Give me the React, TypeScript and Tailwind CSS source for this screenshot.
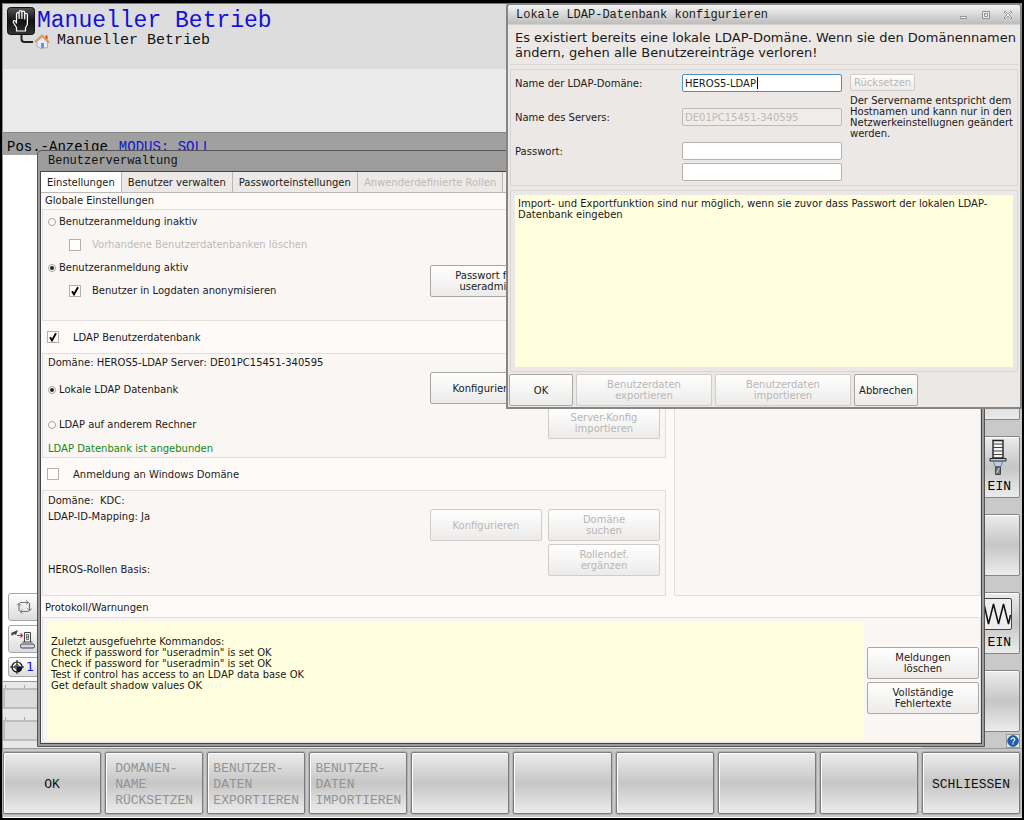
import React from "react";

const mono = "font-['Liberation_Mono',monospace]";

type Children = { children?: React.ReactNode };

function Button({ children, disabled, className = "" }: Children & { disabled?: boolean; className?: string }) {
  return (
    <button
      type="button"
      disabled={disabled}
      className={`flex items-center justify-center rounded-[2px] border bg-linear-to-b from-white to-[#ecebea] text-center leading-[11px] whitespace-pre-line ${
        disabled ? "border-[#cfcccb] text-[#b8b6b5]" : "border-[#a9a6a4] text-[#1a1a1a]"
      } ${className}`}
    >
      {children}
    </button>
  );
}

function Radio({ label, name, checked }: { label: string; name: string; checked?: boolean }) {
  return (
    <label className="flex items-center gap-[3px] pl-[5px]">
      <span className="relative flex size-[8px]">
        <input
          type="radio"
          name={name}
          defaultChecked={checked}
          className="peer size-[8px] appearance-none rounded-full border border-[#a3a09f] bg-white"
        />
        <span className="pointer-events-none absolute inset-[2px] hidden rounded-full bg-[#222] peer-checked:block" />
      </span>
      {label}
    </label>
  );
}

function Check({
  label,
  checked,
  disabled,
  className = "",
}: {
  label: string;
  checked?: boolean;
  disabled?: boolean;
  className?: string;
}) {
  return (
    <label className={`flex items-center ${disabled ? "text-[#bdbab9]" : ""} ${className}`}>
      <span className="relative flex size-[12px]">
        <input
          type="checkbox"
          defaultChecked={checked}
          disabled={disabled}
          className="peer size-[12px] appearance-none border border-[#b3b0af] bg-white"
        />
        <svg viewBox="0 0 12 12" className="pointer-events-none absolute inset-0 hidden size-[12px] peer-checked:block">
          <path d="M3 6.2 5 9.3 9 2.2" fill="none" stroke="#000" strokeWidth="1.9" />
        </svg>
      </span>
      {label}
    </label>
  );
}

function Panel({ children, className = "" }: Children & { className?: string }) {
  return <section className={`flex border border-[#e2dedc] bg-[#faf6f4] ${className}`}>{children}</section>;
}

function SoftKey({ label, disabled }: { label?: string; disabled?: boolean }) {
  return (
    <button
      type="button"
      disabled={disabled}
      aria-label={label ?? "Softkey"}
      className={`flex h-[62px] items-center justify-center rounded-[2px] border border-[#7c7c7c] bg-linear-to-b from-[#ececec] via-[#c6c6c6] to-[#ececec] pt-[4px] text-left text-[13px] leading-[16px] whitespace-pre shadow-[inset_1px_1px_0_#fff,0_0_0_1px_#b0b0b0] ${mono} ${
        disabled ? "text-[#939393]" : "text-[#111]"
      }`}
    >
      {label}
    </button>
  );
}

function SideKey({ children, label }: Children & { label: string }) {
  return (
    <button
      type="button"
      aria-label={label}
      className={`flex h-[62px] w-[98px] shrink-0 flex-col items-end justify-between rounded-[2px] border border-[#858585] bg-linear-to-b from-[#ececec] via-[#c6c6c6] to-[#ececec] pt-[2px] pr-[8px] pb-[2px] text-[13px] leading-[16px] shadow-[inset_1px_1px_0_#fff] ${mono}`}
    >
      {children}
    </button>
  );
}

function HandIcon() {
  return (
    <svg viewBox="0 0 28 28" className="size-[28px] shrink-0">
      <defs>
        <linearGradient id="hand-bg" x1="0" y1="0" x2="0" y2="1">
          <stop offset="0" stopColor="#555" />
          <stop offset="0.5" stopColor="#111" />
          <stop offset="1" stopColor="#333" />
        </linearGradient>
      </defs>
      <rect x="0.5" y="0.5" width="27" height="27" rx="3" fill="url(#hand-bg)" stroke="#111" />
      <path
        d="M9.500 24v-3.500L6.300 15.500c-.5-2 1.200-2.600 2.200-1.200l1 1.700V7.200c0-2 2.600-2 2.600 0v4.300-6.400c0-2 2.800-2 2.800 0v6.400-5.900c0-2 2.800-2 2.800 0v6.400-4.400c0-1.800 2.700-1.800 2.700 0v8.900c0 2-1.100 3-1.900 4.200V24z"
        fill="none"
        stroke="#fff"
        strokeWidth="1.200"
        strokeLinejoin="round"
      />
    </svg>
  );
}

function HomeIcon() {
  return (
    <svg viewBox="0 0 16 15" className="h-[15px] w-[16px] shrink-0">
      <path d="M3 7.500 8.500 3 13.500 8v5.500L7 14.500 3 12.500z" fill="#e8ecf8" stroke="#8a96b8" strokeWidth="0.700" />
      <path d="M7 14.300V9h3v4.800z" fill="#6f8fd0" />
      <path d="M11.500 1.500h2V6l-2-1.700z" fill="#b94a2c" />
      <path d="M.8 8 8 1.500 15 8.500" fill="none" stroke="#e09a4a" strokeWidth="1.800" />
    </svg>
  );
}

function LoopIcon() {
  return (
    <svg viewBox="0 0 18 18" className="size-[18px]" fill="none" stroke="#777" strokeWidth="1.200">
      <path d="M5 4.500h8.500M14.500 5v8M13.500 13.500H5M4 13V5" />
      <path d="m11 2.500 2.500 2-2.500 2M7.500 11.500 5 13.500l2.500 2M2 7.500 4 5l2 2.500M12.500 10.500l2 2.500 2-2.500" strokeWidth="0.900" />
    </svg>
  );
}

function MachineIcon() {
  return (
    <svg viewBox="0 0 26 22" className="h-[22px] w-[26px]">
      <path d="m1 5 7-3-2 5-2-1-2 2z" fill="#444" />
      <path d="M7 7.500h5M10.500 5.500l2 2-2 2" fill="none" stroke="#d22" strokeWidth="1.200" />
      <path d="M14.500 14V4.500h6V14M12.500 14h10" fill="none" stroke="#444" />
      <path d="M16.500 6.500h2v5h-2zM16.500 9h2" fill="#ddd" stroke="#444" strokeWidth="0.700" />
      <rect x="10.500" y="16" width="14" height="4" rx="1.500" fill="#cfd6e6" stroke="#445" />
    </svg>
  );
}

function DatumIcon() {
  return (
    <svg viewBox="0 0 14 14" className="size-[14px]">
      <circle cx="7" cy="7" r="5" fill="#fff" stroke="#111" strokeWidth="1.200" />
      <path d="M7 7h5a5 5 0 0 1-5 5z" fill="#111" />
      <circle cx="7" cy="7" r="2.300" fill="none" stroke="#111" strokeWidth="0.800" />
      <path d="M7 0v14M0 7h14" stroke="#111" strokeWidth="1" />
    </svg>
  );
}

function SpindleIcon() {
  return (
    <svg viewBox="0 0 20 38" className="mr-[3px] h-[38px] w-[20px]">
      <path d="M5 1.500h10V19H5z" fill="#f4f4f4" stroke="#222" strokeWidth="1.400" />
      <path d="M5 5h10M5 8.500h10M5 12h10M5 15.500h10" stroke="#444" />
      <path d="M2 19.500h16v2.500H2z" fill="#ccd" stroke="#222" />
      <path d="M5.500 22.500h9l-1.500 5H7z" fill="#b9cdf2" stroke="#567" strokeWidth="0.700" />
      <path d="M7.500 28h5v7.500h-5z" fill="#777" stroke="#444" />
      <path d="m8.500 34 3-5" stroke="#ddd" />
    </svg>
  );
}

function WaveIcon() {
  return (
    <svg viewBox="0 0 34 32" className="-mr-[1px] mt-[3px] h-[32px] w-[34px]">
      <rect x="0.500" y="0.500" width="33" height="31" rx="1.500" fill="#eee" stroke="#444" />
      <path d="m1 25 5-19 4.500 20 5-20 5 20 5-20 5 20 2-9" fill="none" stroke="#111" strokeWidth="1.500" />
    </svg>
  );
}

function Gauge() {
  return (
    <div className="flex flex-col">
      <div className="flex h-[3px] gap-[18px] pl-[2px]">
        <i className="w-px bg-[#aaa]" />
        <i className="w-px bg-[#aaa]" />
      </div>
      <div className="h-[21px] w-[60px] border-2 border-[#bdbdbd] bg-[#dcdcdc]" />
    </div>
  );
}

function Desktop() {
  return (
    <div className="flex flex-1 flex-col border-l border-[#8f8f8f] bg-[#c9c9c9]">
      <header className={`h-[66px] border-t border-[#777] bg-[#dddddd] pt-[3px] pl-[4px] ${mono}`}>
        <div className="flex items-center gap-[2px]">
          <HandIcon />
          <h1 className="text-[23px] leading-[28px] text-[#1412d4]">Manueller Betrieb</h1>
        </div>
        <div className="-mt-[2px] flex items-center pl-[13px]">
          <svg viewBox="0 0 14 15" className="-mt-[5px] h-[15px] w-[14px]">
            <path d="M1.500 3v5q0 3 3 3H13" fill="none" stroke="#222" strokeWidth="2" />
          </svg>
          <HomeIcon />
          <h2 className="pl-[7px] text-[15px] leading-[16px] text-[#111]">Manueller Betrieb</h2>
        </div>
      </header>
      <div className="h-[63px] bg-[#ebebeb]" />
      <div className={`flex h-[23px] items-center gap-[11px] border-t border-[#8a8a8a] bg-[#a0a0a0] pt-[5px] pl-[4px] text-[14px] leading-[16px] ${mono}`}>
        <span>Pos.-Anzeige</span>
        <span className="text-[#1412d4]">MODUS: SOLL</span>
      </div>
      <div className="flex flex-1">
        <div className="flex flex-1 flex-col justify-end bg-white">
          <div className="flex flex-col items-start gap-[4px] pb-[4px] pl-[5px]">
            <button type="button" aria-label="Zyklus" className="flex h-[28px] w-[40px] items-center rounded-[3px] border border-[#a5a5a5] bg-linear-to-b from-white to-[#dcdcdc] pl-[6px]">
              <LoopIcon />
            </button>
            <button type="button" aria-label="Maschine" className="flex h-[28px] w-[40px] items-center rounded-[3px] border border-[#a5a5a5] bg-linear-to-b from-white to-[#dcdcdc] pl-px">
              <MachineIcon />
            </button>
            <button type="button" className="flex h-[20px] w-[40px] items-center gap-[2px] rounded-[3px] border border-[#a5a5a5] bg-linear-to-b from-white to-[#dcdcdc] pl-px text-[13px] text-[#1412d4] font-['DejaVu_Sans',sans-serif]">
              <DatumIcon />1
            </button>
          </div>
          <div className="flex h-[67px] flex-col gap-[8px] border-t border-[#999] bg-[#e8e8e8] pt-[3px]">
            <Gauge />
            <Gauge />
          </div>
        </div>
        <aside className="flex w-[100px] flex-col items-end justify-end gap-[16px] pr-[2px]">
          <SideKey label="Softkey 1" />
          <SideKey label="Spindel ein">
            <SpindleIcon />
            <span>EIN</span>
          </SideKey>
          <SideKey label="Softkey 3" />
          <SideKey label="Override ein">
            <WaveIcon />
            <span>EIN</span>
          </SideKey>
          <div className="flex flex-col items-end gap-[2px]">
            <SideKey label="Softkey 5" />
            <button type="button" aria-label="Hilfe" className="flex size-[14px] items-center justify-center border border-[#999] bg-[#e6e6e6]">
              <svg viewBox="0 0 12 12" className="size-[12px]">
                <circle cx="6" cy="6" r="5.400" fill="#1d5fb4" stroke="#0c3570" strokeWidth="0.600" />
                <path d="M4.200 4.700c0-2.400 3.700-2.300 3.600 0 0 1.200-1.800 1.200-1.800 2.700M6 8.300v1.300" fill="none" stroke="#fff" strokeWidth="1.200" />
              </svg>
            </button>
          </div>
        </aside>
      </div>
      <footer className="grid grid-cols-10 gap-[4px] border-t border-[#999] border-b border-b-white pt-[3px] pr-[2px] pb-[3px]">
        <SoftKey label="OK" />
        <SoftKey disabled label={"DOMÄNEN-\nNAME\nRÜCKSETZEN"} />
        <SoftKey disabled label={"BENUTZER-\nDATEN\nEXPORTIEREN"} />
        <SoftKey disabled label={"BENUTZER-\nDATEN\nIMPORTIEREN"} />
        <SoftKey />
        <SoftKey />
        <SoftKey />
        <SoftKey />
        <SoftKey />
        <SoftKey label="SCHLIESSEN" />
      </footer>
    </div>
  );
}

const tabs = [
  { label: "Einstellungen", active: true },
  { label: "Benutzer verwalten" },
  { label: "Passworteinstellungen" },
  { label: "Anwenderdefinierte Rollen", disabled: true },
];

function UserWindow() {
  return (
    <div className="absolute top-[150px] right-[39px] bottom-[73px] left-[37px] flex flex-col rounded-t-[4px] border border-[#555] bg-[#9c9c9c] px-[2px] pb-[2px]">
      <h2 className={`h-[20px] shrink-0 pl-[8px] text-[12px] leading-[21px] text-[#111] ${mono}`}>Benutzerverwaltung</h2>
      <div className="flex flex-1 flex-col border border-[#444] bg-[#fefaf8] text-[#1a1a1a]">
        <div role="tablist" className="flex h-[21px] items-stretch border-b border-[#bbb7b5] bg-[#f3efed]">
          {tabs.map((t) => (
            <button
              key={t.label}
              type="button"
              role="tab"
              aria-selected={!!t.active}
              disabled={t.disabled}
              className={`border-r border-[#bbb7b5] px-[6px] ${t.active ? "bg-white" : "bg-[#ece9e7]"} ${
                t.disabled ? "text-[#bdbab9]" : ""
              }`}
            >
              {t.label}
            </button>
          ))}
        </div>
        <div className="flex gap-[8px] pl-px">
          <div className="flex w-[624px] flex-col">
            <h3 className="h-[16px] pl-[3px] leading-[16px]">Globale Einstellungen</h3>
            <Panel className="h-[112px] justify-between pr-[5px]">
              <div className="flex flex-col *:h-[23px]">
                <Radio name="login" label="Benutzeranmeldung inaktiv" />
                <Check disabled className="gap-[11px] pl-[26px]" label="Vorhandene Benutzerdatenbanken löschen" />
                <Radio name="login" checked label="Benutzeranmeldung aktiv" />
                <Check checked className="gap-[11px] pl-[26px]" label="Benutzer in Logdaten anonymisieren" />
              </div>
              <div className="grid grid-cols-2 gap-[6px] pt-[55px]">
                <Button className="h-[32px] w-[112px]">{"Passwort für\nuseradmin"}</Button>
              </div>
            </Panel>
            <Check checked className="h-[32px] gap-[14px] pl-[5px]" label="LDAP Benutzerdatenbank" />
            <Panel className="h-[105px] justify-between pr-[5px]">
              <div className="flex flex-col">
                <p className="pl-[5px] leading-[18px]">Domäne: HEROS5-LDAP Server: DE01PC15451-340595</p>
                <div className="flex flex-col *:h-[35px]">
                  <Radio name="db" checked label="Lokale LDAP Datenbank" />
                  <Radio name="db" label="LDAP auf anderem Rechner" />
                </div>
                <p className="pl-[5px] leading-[14px] text-[#128a12]">LDAP Datenbank ist angebunden</p>
              </div>
              <div className="grid grid-cols-2 content-start gap-x-[6px] gap-y-[3px] pt-[18px]">
                <Button className="h-[32px] w-[112px]">Konfigurieren</Button>
                <Button disabled className="col-start-2 row-start-2 h-[32px] w-[112px]">{"Server-Konfig\nimportieren"}</Button>
              </div>
            </Panel>
            <Check className="h-[32px] gap-[14px] pl-[5px]" label="Anmeldung an Windows Domäne" />
            <Panel className="h-[106px] justify-between pr-[5px]">
              <div className="flex flex-col pl-[5px] leading-[16px]">
                <p className="pt-[2px] whitespace-pre">Domäne:  KDC:</p>
                <p>LDAP-ID-Mapping: Ja</p>
                <p className="pt-[37px]">HEROS-Rollen Basis:</p>
              </div>
              <div className="grid grid-cols-2 content-start gap-x-[6px] gap-y-[3px] pt-[18px]">
                <Button disabled className="h-[32px] w-[112px]">Konfigurieren</Button>
                <Button disabled className="h-[32px] w-[112px]">{"Domäne\nsuchen"}</Button>
                <Button disabled className="col-start-2 h-[32px] w-[112px]">{"Rollendef.\nergänzen"}</Button>
              </div>
            </Panel>
          </div>
          <Panel className="mt-[16px] flex-1" />
        </div>
        <h3 className="h-[21px] pl-[4px] leading-[23px]">Protokoll/Warnungen</h3>
        <Panel className="ml-px flex-1 gap-[3px] pt-[4px] pr-px pb-[3px] pl-[5px]">
          <pre className="flex-1 bg-[#ffffdf] pt-[14px] pl-[3px] leading-[11px] font-['DejaVu_Sans',sans-serif]">
            {`Zuletzt ausgefuehrte Kommandos:
Check if password for "useradmin" is set OK
Check if password for "useradmin" is set OK
Test if control has access to an LDAP data base OK
Get default shadow values OK`}
          </pre>
          <div className="flex w-[112px] flex-col justify-center gap-[3px]">
            <Button className="h-[32px]">{"Meldungen\nlöschen"}</Button>
            <Button className="h-[32px]">{"Vollständige\nFehlertexte"}</Button>
          </div>
        </Panel>
      </div>
    </div>
  );
}

const field = "h-[18px] w-full rounded-[2px] border px-[2px] leading-[16px] outline-none";

function LdapDialog() {
  return (
    <div role="dialog" aria-labelledby="ldap-title" className="absolute top-[3px] right-[2px] left-[506px] flex flex-col rounded-t-[4px] border-2 border-[#858585] bg-[#ece8e6] text-[#1a1a1a]">
      <div className="flex h-[19px] items-center justify-between rounded-t-[3px] bg-linear-to-b from-[#f4f4f4] to-[#bdbdbd] pr-[7px] pl-[8px]">
        <h2 id="ldap-title" className={`text-[12px] leading-[18px] ${mono}`}>Lokale LDAP-Datenbank konfigurieren</h2>
        <div className="flex gap-[12px] text-[#8f8f8f]">
          <button type="button" aria-label="Minimieren">
            <svg viewBox="0 0 10 10" className="size-[10px]"><path d="M1.500 6.500h6v2h-6z" fill="#fff" stroke="currentColor" /></svg>
          </button>
          <button type="button" aria-label="Maximieren">
            <svg viewBox="0 0 10 10" className="size-[10px]"><path d="M1.500 1.500h7v7h-7zM3.500 3.500h3v3h-3z" fill="#eee" stroke="currentColor" /></svg>
          </button>
          <button type="button" aria-label="Schließen">
            <svg viewBox="0 0 10 10" className="size-[10px]"><path d="m1 2 1-1 3 3 3-3 1 1-3 3 3 3-1 1-3-3-3 3-1-1 3-3z" fill="#fff" stroke="currentColor" strokeWidth="0.900" /></svg>
          </button>
        </div>
      </div>
      <div className="flex flex-col gap-[4px] border-t border-[#d5d1cf] px-[2px]">
        <p className="border-b border-[#d9d5d3] pt-[5px] pb-[4px] pl-[5px] text-[13px] leading-[15px]">
          Es existiert bereits eine lokale LDAP-Domäne. Wenn sie den Domänennamen ändern, gehen alle Benutzereinträge verloren!
        </p>
        <div className="flex gap-[8px] border border-[#d9d5d3] px-[4px] py-[4px]">
          <div className="grid grid-cols-[167px_160px] grid-rows-[18px_18px_18px_18px] items-center">
            <label htmlFor="domain">Name der LDAP-Domäne:</label>
            <div className="relative">
              <input id="domain" defaultValue="HEROS5-LDAP" className={`${field} border-[#4a90c4] bg-white`} />
              <span className="absolute top-[3px] left-[75px] h-[12px] w-px bg-black" />
            </div>
            <label htmlFor="server" className="pt-[32px]">Name des Servers:</label>
            <input id="server" disabled defaultValue="DE01PC15451-340595" className={`${field} mt-[32px] border-[#bdbab8] bg-[#efecea] text-[#bdbab9]`} />
            <label htmlFor="pw" className="pt-[64px]">Passwort:</label>
            <input id="pw" type="password" className={`${field} mt-[64px] border-[#b5b2b0] bg-white`} />
            <input aria-label="Passwort wiederholen" type="password" className={`${field} col-start-2 mt-[70px] border-[#b5b2b0] bg-white`} />
          </div>
          <div className="flex h-[107px] flex-1 flex-col items-start gap-[4px]">
            <Button disabled className="h-[17px] px-[3px]">Rücksetzen</Button>
            <p className="leading-[11px]">
              Der Servername entspricht dem Hostnamen und kann nur in den Netzwerkeinstellugnen geändert werden.
            </p>
          </div>
        </div>
        <div className="border border-[#d9d5d3] p-[4px]">
          <p className="h-[172px] bg-[#ffffdf] px-[3px] pt-[3px] leading-[11px]">
            Import- und Exportfunktion sind nur möglich, wenn sie zuvor dass Passwort der lokalen LDAP-Datenbank eingeben
          </p>
        </div>
      </div>
      <div className="flex gap-[3px] pt-[2px] pb-px pl-px">
        <Button className="h-[32px] w-[64px]">OK</Button>
        <Button disabled className="h-[32px] w-[136px]">{"Benutzerdaten\nexportieren"}</Button>
        <Button disabled className="h-[32px] w-[136px]">{"Benutzerdaten\nimportieren"}</Button>
        <Button className="h-[32px] w-[64px]">Abbrechen</Button>
      </div>
    </div>
  );
}

export default function App() {
  return (
    <main className="relative flex min-h-screen flex-col bg-black pt-[3px] pr-[2px] pb-[2px] pl-[2px] text-[10px] font-['DejaVu_Sans',sans-serif]">
      <Desktop />
      <UserWindow />
      <LdapDialog />
    </main>
  );
}
